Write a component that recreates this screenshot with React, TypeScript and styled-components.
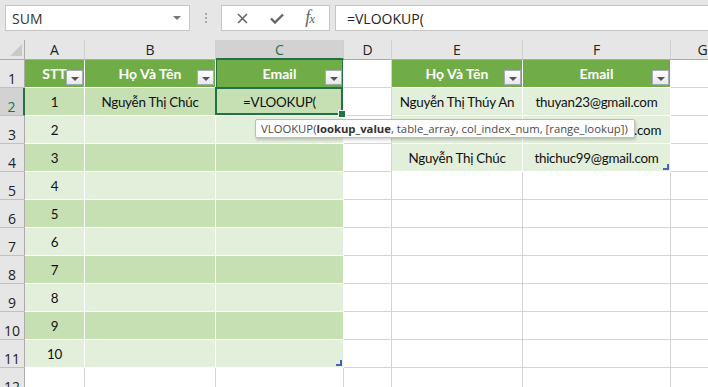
import styled, { createGlobalStyle, css } from 'styled-components';

const GlobalStyle = createGlobalStyle`
  html, body { margin: 0; padding: 0; background: #fff; overflow: hidden; }
  * { box-sizing: border-box; }
`;

const GREEN = '#217346';
const GRID = '#d4d4d4';

const Window = styled.div`
  position: relative;
  width: 708px;
  height: 387px;
  overflow: hidden;
  display: flex;
  flex-direction: column;
  background: #e6e6e6;
`;

const FormulaRow = styled.div`
  flex: none;
  height: 40px;
  display: flex;
  align-items: flex-start;
  padding: 5px 0 0 5px;
  font-family: "Open Sans", "Noto Sans", sans-serif;
`;

const NameBox = styled.div`
  width: 185px;
  height: 26px;
  background: #fff;
  border: 1px solid #c6c6c6;
  display: flex;
  align-items: center;
  justify-content: space-between;
  padding: 0 8px 0 6px;
  font-size: 14px;
  color: #333;
`;

const Caret = styled.span`
  width: 0;
  height: 0;
  border-left: 4px solid transparent;
  border-right: 4px solid transparent;
  border-top: 4px solid #777;
`;

const Grip = styled.div`
  width: 31px;
  height: 26px;
  display: flex;
  flex-direction: column;
  align-items: center;
  justify-content: center;
  gap: 2px;

  span {
    width: 2px;
    height: 2px;
    background: #a8a8a8;
  }
`;

const ButtonGroup = styled.div`
  width: 109px;
  height: 26px;
  background: #fff;
  border: 1px solid #c6c6c6;
  display: flex;
  align-items: center;
  justify-content: space-around;
  padding: 0 4px;
  color: #666;
`;

const Fx = styled.span`
  font-family: "Liberation Serif", serif;
  font-style: italic;
  font-size: 18px;
  color: #666;
  letter-spacing: -1px;
  margin-top: -2px;

  small {
    font-size: 13px;
  }
`;

const FormulaInput = styled.div`
  flex: 1;
  height: 26px;
  margin-left: 5px;
  background: #fff;
  border: 1px solid #c6c6c6;
  border-right: none;
  display: flex;
  align-items: center;
  padding-left: 11px;
  font-size: 14px;
  color: #222;
`;

const Sheet = styled.div`
  display: grid;
  grid-template-columns: 25px 60px 131px 128px 48px 131px 148px 64px;
  grid-template-rows: 20px repeat(12, 28px);
  background: #fff;
  font-family: "Lato", sans-serif;
  font-size: 13.4px;
  letter-spacing: -0.25px;
  color: #111;
`;

const Corner = styled.div`
  position: relative;
  background: #e6e6e6;
  border-right: 1px solid #ababab;
  border-bottom: 1px solid #ababab;

  &::after {
    content: '';
    position: absolute;
    right: 2px;
    bottom: 3px;
    border-left: 12px solid transparent;
    border-bottom: 12px solid #c9c9c9;
  }
`;

const ColHead = styled.div<{ $selected?: boolean }>`
  display: flex;
  align-items: center;
  justify-content: center;
  background: ${p => (p.$selected ? '#d2d2d2' : '#e6e6e6')};
  border-right: 1px solid #d0d0d0;
  border-bottom: ${p => (p.$selected ? `2px solid ${GREEN}` : '1px solid #ababab')};
  color: ${p => (p.$selected ? GREEN : '#222')};
  font-family: "Open Sans", "Noto Sans", sans-serif;
  font-size: 14px;
  letter-spacing: 0;
`;

const RowHead = styled.div<{ $selected?: boolean }>`
  display: flex;
  align-items: flex-end;
  justify-content: center;
  padding-bottom: 1px;
  background: ${p => (p.$selected ? '#d2d2d2' : '#e6e6e6')};
  border-bottom: 1px solid #c0c0c0;
  border-right: ${p => (p.$selected ? `2px solid ${GREEN}` : '1px solid #ababab')};
  color: ${p => (p.$selected ? GREEN : '#222')};
  font-family: "Open Sans", "Noto Sans", sans-serif;
  font-size: 14px;
  letter-spacing: 0;
  line-height: 1;
`;

type Fill = 'none' | 'head' | 'dark' | 'light';

const fills: Record<Fill, string> = {
  none: '#fff',
  head: '#70ad47',
  dark: '#c6e0b4',
  light: '#e2efda',
};

const Cell = styled.div<{ $fill: Fill; $active?: boolean; $colSel?: boolean; $corner?: boolean }>`
  position: relative;
  display: flex;
  align-items: center;
  justify-content: center;
  white-space: nowrap;
  background: ${p => fills[p.$fill]};
  border-right: 1px solid ${p => (p.$fill === 'none' ? GRID : '#fff')};
  border-bottom: 1px solid ${p => (p.$fill === 'none' ? GRID : '#fff')};
  ${p => p.$fill === 'head' && css`
    color: #fff;
    font-weight: 700;
    font-size: 14px;
    letter-spacing: 0;
  `}
  ${p => p.$colSel && css`
    box-shadow: inset 1px 0 0 ${GREEN}, inset -1px 0 0 ${GREEN};
  `}
  ${p => p.$active && css`
    z-index: 2;
    &::before {
      content: '';
      position: absolute;
      inset: -1px 0 0 -1px;
      border: 2px solid ${GREEN};
    }
    &::after {
      content: '';
      position: absolute;
      right: -3px;
      bottom: -3px;
      width: 6px;
      height: 6px;
      background: ${GREEN};
      border: 1px solid #fff;
    }
  `}
  ${p => p.$corner && css`
    &::after {
      content: '';
      position: absolute;
      right: 1px;
      bottom: 1px;
      width: 4px;
      height: 4px;
      border-right: 2px solid #4a5fc1;
      border-bottom: 2px solid #4a5fc1;
    }
  `}
`;

const FilterButton = styled.span`
  position: absolute;
  right: 1px;
  bottom: 2px;
  width: 17px;
  height: 15px;
  border: 1px solid #a3abb5;
  background: linear-gradient(#ffffff, #e8e8e8);
  display: flex;
  align-items: center;
  justify-content: center;

  &::after {
    content: '';
    border-left: 4px solid transparent;
    border-right: 4px solid transparent;
    border-top: 4px solid #555;
    margin-top: 2px;
  }
`;

const Tooltip = styled.div`
  position: absolute;
  left: 255px;
  top: 119px;
  height: 19px;
  display: flex;
  align-items: center;
  padding: 0 6px 0 5px;
  background: #fff;
  border: 1px solid #bcbcbc;
  border-radius: 2px;
  box-shadow: 1px 2px 3px rgba(0, 0, 0, 0.18);
  font-family: "Open Sans", "Noto Sans", sans-serif;
  font-size: 11.3px;
  color: #4a4a4a;
  white-space: nowrap;
  z-index: 5;

  b {
    color: #333;
  }
`;

type CellData = {
  text?: string;
  fill: Fill;
  filter?: boolean;
  active?: boolean;
  colSel?: boolean;
  corner?: boolean;
};

const letters = ['A', 'B', 'C', 'D', 'E', 'F', 'G'];

const lookup: Record<number, [string, string]> = {
  2: ['Nguyễn Thị Thúy An', 'thuyan23@gmail.com'],
  3: ['Nguyễn Thị Thu Hà', 'thuhang88@gmail.com'],
  4: ['Nguyễn Thị Chúc', 'thichuc99@gmail.com'],
};

function cellFor(row: number, col: number): CellData {
  if (row === 1) {
    if (col === 0) return { text: 'STT', fill: 'head', filter: true };
    if (col === 1 || col === 4) return { text: 'Họ Và Tên', fill: 'head', filter: true };
    if (col === 2) return { text: 'Email', fill: 'head', filter: true, colSel: true };
    if (col === 5) return { text: 'Email', fill: 'head', filter: true };
    return { fill: 'none' };
  }
  if (row <= 11 && col <= 2) {
    const fill: Fill = row % 2 === 0 ? 'dark' : 'light';
    if (col === 0) return { text: String(row - 1), fill };
    if (row === 2 && col === 1) return { text: 'Nguyễn Thị Chúc', fill };
    if (row === 2 && col === 2) return { text: '=VLOOKUP(', fill, active: true };
    return { fill, corner: row === 11 && col === 2 };
  }
  if (row <= 4 && (col === 4 || col === 5)) {
    return { text: lookup[row][col - 4], fill: 'light', corner: row === 4 && col === 5 };
  }
  return { fill: 'none' };
}

const rows = Array.from({ length: 12 }, (_, i) => i + 1);

export default function App() {
  return (
    <>
      <GlobalStyle />
      <Window>
        <FormulaRow>
          <NameBox>
            SUM
            <Caret />
          </NameBox>
          <Grip>
            <span />
            <span />
            <span />
          </Grip>
          <ButtonGroup>
            <svg width="11" height="11" viewBox="0 0 11 11">
              <path d="M1 1 L10 10 M10 1 L1 10" stroke="#666" strokeWidth="1.6" fill="none" />
            </svg>
            <svg width="14" height="11" viewBox="0 0 14 11">
              <path d="M1 5.5 L5 9.5 L13 1.5" stroke="#666" strokeWidth="2.4" fill="none" />
            </svg>
            <Fx>
              f<small>x</small>
            </Fx>
          </ButtonGroup>
          <FormulaInput>=VLOOKUP(</FormulaInput>
        </FormulaRow>

        <Sheet>
          <Corner />
          {letters.map(l => (
            <ColHead key={l} $selected={l === 'C'}>
              {l}
            </ColHead>
          ))}
          {rows.map(r => (
            <Row key={r} row={r} />
          ))}
        </Sheet>

        <Tooltip>
          VLOOKUP(<b>lookup_value</b>, table_array, col_index_num, [range_lookup])
        </Tooltip>
      </Window>
    </>
  );
}

function Row({ row }: { row: number }) {
  return (
    <>
      <RowHead $selected={row === 2}>{row}</RowHead>
      {letters.map((_, c) => {
        const d = cellFor(row, c);
        return (
          <Cell key={c} $fill={d.fill} $active={d.active} $colSel={d.colSel} $corner={d.corner}>
            {d.text}
            {d.filter && <FilterButton />}
          </Cell>
        );
      })}
    </>
  );
}
